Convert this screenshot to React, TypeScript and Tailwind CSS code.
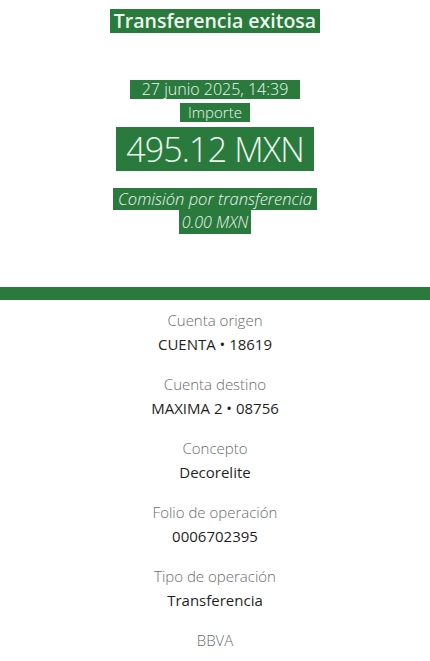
const details = [
  { label: "Cuenta origen", value: "CUENTA • 18619" },
  { label: "Cuenta destino", value: "MAXIMA 2 • 08756" },
  { label: "Concepto", value: "Decorelite" },
  { label: "Folio de operación", value: "0006702395" },
  { label: "Tipo de operación", value: "Transferencia" },
];

function Mark({ children, className = "" }: { children: React.ReactNode; className?: string }) {
  return <span className={`inline-block bg-[#2a7a3e] text-[#eef7ee] px-1 ${className}`}>{children}</span>;
}

export default function App() {
  return (
    <div className="w-[430px] h-[661px] overflow-hidden bg-white text-center font-['Open_Sans','Noto_Sans',sans-serif]">
      <div className="pt-[9px]">
        <Mark className="text-[19.5px] font-semibold leading-[24px] px-[4px]">Transferencia exitosa</Mark>
      </div>

      <div className="mt-[46px] flex flex-col items-center">
        <Mark className="text-[16px] font-light leading-[19px] px-[12px]">27 junio 2025, 14:39</Mark>
        <Mark className="mt-[4px] text-[15px] font-light leading-[19px] px-[8px]">Importe</Mark>
        <Mark className="mt-[5px] text-[34px] font-light leading-[44px] px-[10px] tracking-tight">495.12 MXN</Mark>
        <Mark className="mt-[17px] text-[16.5px] font-light italic leading-[22px] px-[5px]">Comisión por transferencia</Mark>
        <Mark className="text-[16px] font-light italic leading-[24px] px-[3px]">0.00 MXN</Mark>
      </div>

      <div className="mt-[53px] h-[13px] bg-[#2a7a3e]" />

      <div className="mt-[10px] flex flex-col gap-[20px]">
        {details.map((d) => (
          <div key={d.label} className="flex flex-col items-center">
            <span className="text-[15px] font-light leading-[20px] text-[#6b6b6b]">{d.label}</span>
            <span className="mt-[4px] text-[15px] leading-[20px] text-[#1f1f1f]">{d.value}</span>
          </div>
        ))}
        <span className="text-[15px] font-light leading-[20px] text-[#6b6b6b]">BBVA</span>
      </div>
    </div>
  );
}
